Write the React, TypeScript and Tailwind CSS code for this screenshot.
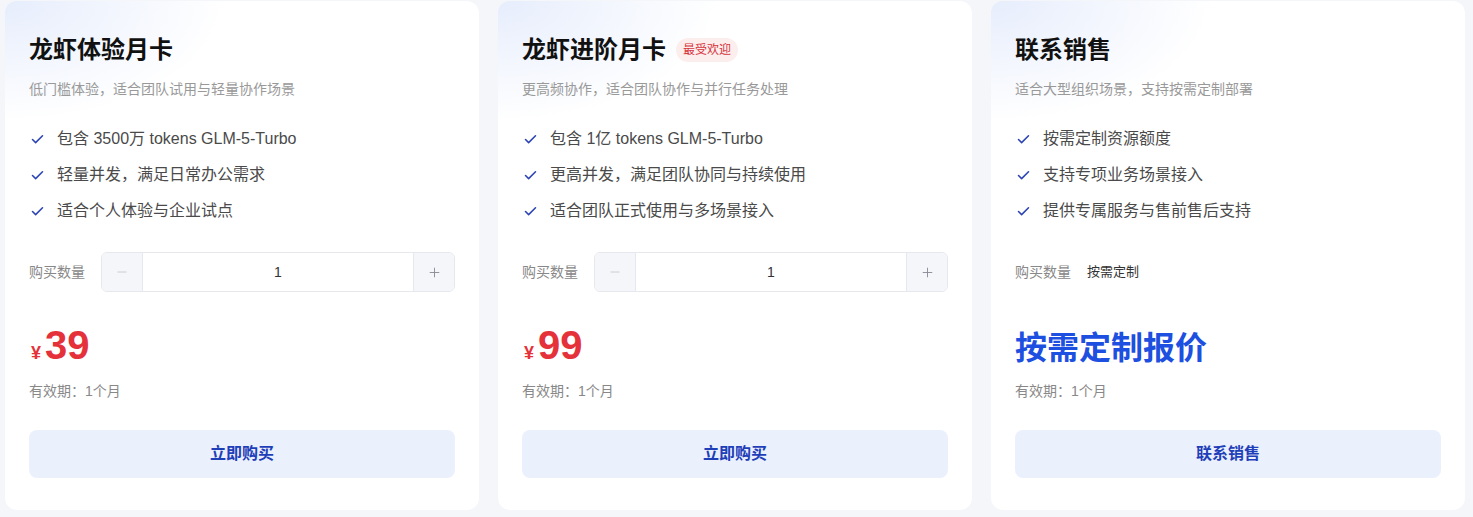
import { Check, Minus, Plus } from "lucide-react";

type Plan = {
  title: string;
  badge?: string;
  desc: string;
  features: string[];
  price?: string;
  quote?: string;
  action: string;
};

const plans: Plan[] = [
  {
    title: "龙虾体验月卡",
    desc: "低门槛体验，适合团队试用与轻量协作场景",
    features: ["包含 3500万 tokens GLM-5-Turbo", "轻量并发，满足日常办公需求", "适合个人体验与企业试点"],
    price: "39",
    action: "立即购买",
  },
  {
    title: "龙虾进阶月卡",
    badge: "最受欢迎",
    desc: "更高频协作，适合团队协作与并行任务处理",
    features: ["包含 1亿 tokens GLM-5-Turbo", "更高并发，满足团队协同与持续使用", "适合团队正式使用与多场景接入"],
    price: "99",
    action: "立即购买",
  },
  {
    title: "联系销售",
    desc: "适合大型组织场景，支持按需定制部署",
    features: ["按需定制资源额度", "支持专项业务场景接入", "提供专属服务与售前售后支持"],
    quote: "按需定制报价",
    action: "联系销售",
  },
];

function Stepper() {
  return (
    <div className="flex h-10 flex-1 overflow-hidden rounded-md border border-[#e6e8ee]">
      <button className="flex w-[41px] items-center justify-center border-r border-[#e6e8ee] bg-[#f5f6fa] text-[#c4c7cf]">
        <Minus size={14} strokeWidth={1.5} />
      </button>
      <div className="flex flex-1 items-center justify-center text-[14px] text-[#333]">1</div>
      <button className="flex w-[41px] items-center justify-center border-l border-[#e6e8ee] bg-[#f5f6fa] text-[#8a8d96]">
        <Plus size={15} strokeWidth={1.5} />
      </button>
    </div>
  );
}

function PlanCard({ plan }: { plan: Plan }) {
  return (
    <div className="flex w-[474px] flex-col rounded-xl bg-white bg-[radial-gradient(220px_120px_at_0_0,#e6edfc,#ffffff)] px-6 pt-[33px] pb-8">
      <div className="flex h-8 items-center gap-[10px]">
        <h2 className="text-[24px] leading-8 font-bold text-[#111]">{plan.title}</h2>
        {plan.badge && (
          <span className="rounded-full bg-[#fdeeee] px-[7px] text-[12px] leading-6 text-[#d6323a]">
            {plan.badge}
          </span>
        )}
      </div>
      <p className="mt-[13px] text-[14px] leading-5 text-[#999]">{plan.desc}</p>

      <ul className="mt-[28px] flex flex-col gap-3">
        {plan.features.map((f) => (
          <li key={f} className="flex h-6 items-center gap-[12px] text-[16px] text-[#4a4a4a]">
            <Check size={15} strokeWidth={2.5} className="ml-[1px] text-[#2c44b4]" />
            <span>{f}</span>
          </li>
        ))}
      </ul>

      <div className="mt-[29px] flex h-10 items-center gap-4">
        <span className="text-[14px] text-[#888]">购买数量</span>
        {plan.price ? (
          <Stepper />
        ) : (
          <span className="text-[13px] text-[#333]">按需定制</span>
        )}
      </div>

      {plan.price ? (
        <div className="mt-[34px] flex h-[38px] items-end">
          <span className="mb-[2px] ml-[2px] text-[18px] leading-none font-bold text-[#e5323a]">¥</span>
          <span className="ml-[4px] text-[40px] leading-[38px] font-bold text-[#e5323a]">{plan.price}</span>
        </div>
      ) : (
        <div className="mt-[36px] flex h-[40px] items-center text-[32px] font-bold text-[#1d4fe0]">
          {plan.quote}
        </div>
      )}

      <p className={`${plan.price ? "mt-[17px]" : "mt-[13px]"} text-[14px] leading-5 text-[#888]`}>有效期：1个月</p>

      <button className="mt-[29px] h-12 w-full rounded-lg bg-[#ebf0fd] text-[16px] font-bold text-[#1f3fb8]">
        {plan.action}
      </button>
    </div>
  );
}

export default function App() {
  return (
    <div
      className="min-h-[517px] bg-[#f4f6f9] pt-[1px] pl-[5px]"
      style={{ fontFamily: '"Liberation Sans", "Noto Sans CJK SC", sans-serif' }}
    >
      <div className="flex gap-[19px]">
        {plans.map((p) => (
          <PlanCard key={p.title} plan={p} />
        ))}
      </div>
    </div>
  );
}
